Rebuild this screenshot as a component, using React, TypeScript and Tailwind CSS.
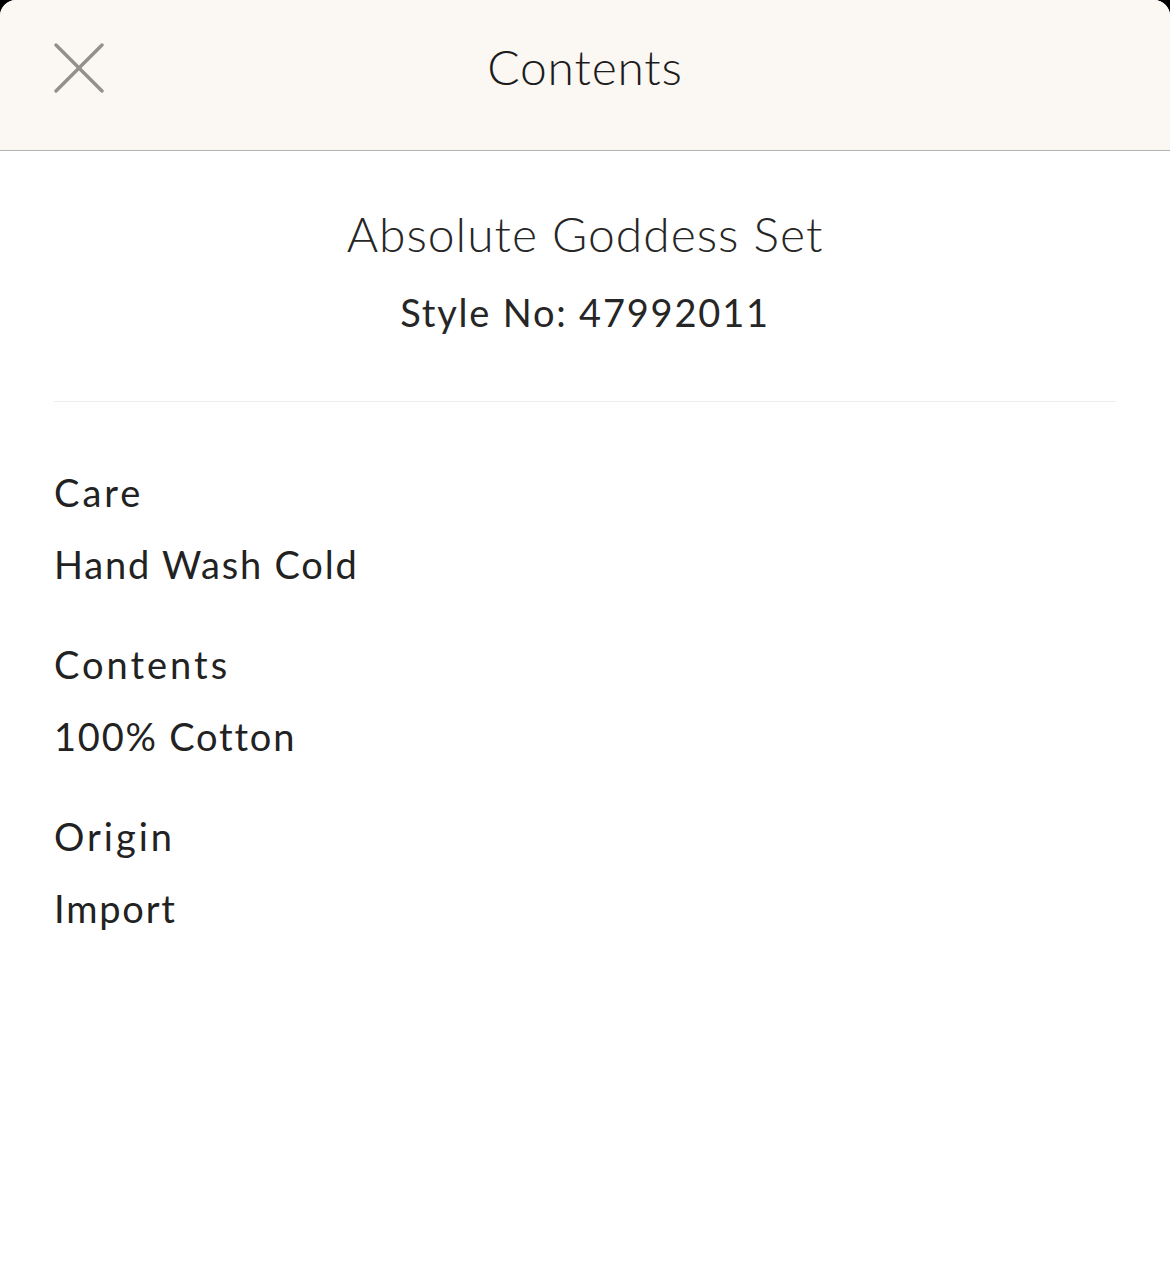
const details = [
  { label: "Care", value: "Hand Wash Cold" },
  { label: "Contents", value: "100% Cotton" },
  { label: "Origin", value: "Import" },
];

export default function App() {
  return (
    <div className="w-[1170px] h-[1269px] bg-black" style={{ fontFamily: "Lato, 'Open Sans', sans-serif" }}>
      <div className="h-full bg-white rounded-t-[16px] overflow-hidden text-[#222222]">
        {/* Header */}
        <div className="relative h-[151px] bg-[#fbf7f2] border-b border-[#b3b3b3] flex items-center justify-center">
          <button className="absolute left-[54px] top-[43px] w-[50px] h-[50px]">
            <svg viewBox="0 0 50 50" className="w-full h-full" fill="none" stroke="#94908d" strokeWidth="3.4" strokeLinecap="round">
              <line x1="2" y1="2" x2="48" y2="48" />
              <line x1="48" y1="2" x2="2" y2="48" />
            </svg>
          </button>
          <h1 className="text-[48px] font-light tracking-[0.8px] -mt-[16px] text-[#1c1c1c]">Contents</h1>
        </div>

        {/* Product */}
        <div className="flex flex-col items-center pt-[54px] pb-[66px] mx-[54px] border-b border-[#ececec]">
          <h2 className="text-[48px] font-light leading-[1.2] tracking-[1px] text-[#262626]">Absolute Goddess Set</h2>
          <p className="mt-[27px] text-[38px] leading-[1.2] tracking-[1.8px] text-[#262626]">Style No: 47992011</p>
        </div>

        {/* Details */}
        <div className="px-[54px] pt-[68px] flex flex-col gap-[56px]">
          {details.map((d) => (
            <div key={d.label} className="flex flex-col gap-[28px]">
              <div className="text-[38px] leading-[44px] tracking-[3px]">{d.label}</div>
              <div className="text-[38px] leading-[44px] tracking-[1.8px]">{d.value}</div>
            </div>
          ))}
        </div>
      </div>
    </div>
  );
}
